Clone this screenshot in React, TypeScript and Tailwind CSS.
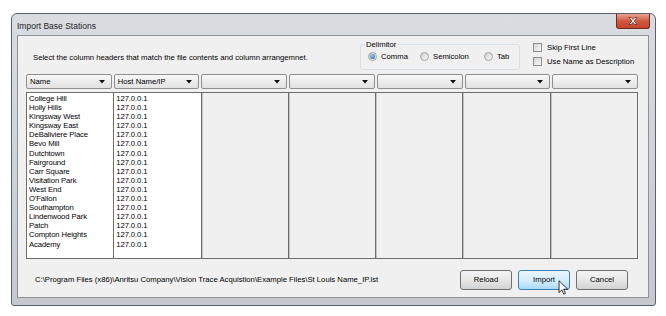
import React from 'react';

const stations = [
  'College Hill',
  'Holly Hills',
  'Kingsway West',
  'Kingsway East',
  'DeBaliviere Place',
  'Bevo Mill',
  'Dutchtown',
  'Fairground',
  'Carr Square',
  'Visitation Park',
  'West End',
  "O'Fallon",
  'Southampton',
  'Lindenwood Park',
  'Patch',
  'Compton Heights',
  'Academy',
];

const headers = ['Name', 'Host Name/IP', '', '', '', '', ''];

const Radio = ({ checked = false }: { checked?: boolean }) => (
  <span className="flex h-[9px] w-[9px] shrink-0 items-center justify-center rounded-full border border-[#a3a3a3] bg-linear-to-br from-[#cfcfcf] to-[#f9f9f9]">
    {checked && <span className="h-[5px] w-[5px] rounded-full bg-[radial-gradient(circle_at_40%_35%,#8fd0f5,#1d5e9e)]" />}
  </span>
);

const Check = () => (
  <span className="block h-[9px] w-[9px] border border-[#8f8f8f] bg-linear-to-br from-[#d6d6d6] to-[#f7f7f7]" />
);

const Button = ({ label, hot = false }: { label: string; hot?: boolean }) => (
  <div
    className={
      hot
        ? 'flex h-[20px] w-[52px] items-center justify-center rounded-[3px] border border-[#3c7fb1] bg-linear-to-b from-[#eaf6fd] via-[#d6eefb] to-[#a9daf6]'
        : 'flex h-[20px] w-[52px] items-center justify-center rounded-[3px] border border-[#707070] bg-linear-to-b from-[#f4f4f4] via-[#e8e8e8] to-[#d2d2d2]'
    }
  >
    {label}
  </div>
);

export default function App() {
  return (
    <div className="h-[316px] w-[666px] overflow-hidden bg-white pl-[11px] pt-[13px] font-['Liberation_Sans',Arial,sans-serif] text-[7.7px] leading-[9px] text-black">
      <div className="flex h-[293px] w-[645px] flex-col rounded-t-[6px] rounded-b-[3px] border border-[#5d6166] bg-linear-to-b from-[#d9dde2] to-[#c4c9cf]">
        {/* title bar */}
        <div className="flex h-[21px] items-start">
          <span className="ml-[5px] mt-[7px] text-[8.5px] leading-[10px] text-[#1e1e1e]">Import Base Stations</span>
          <div className="ml-auto mr-[5px] flex h-[15px] w-[34px] items-center justify-center rounded-b-[3px] border border-t-0 border-[#6b2b21] bg-linear-to-b from-[#e8a593] via-[#d0583f] to-[#c7442c]">
            <svg width="10" height="8" viewBox="0 0 10 8">
              <path
                d="M1 0.5h2.2L5 2.6 6.8 0.5H9L6.2 4 9 7.5H6.8L5 5.4 3.2 7.5H1L3.8 4z"
                fill="#fff"
                stroke="#5a1d14"
                strokeWidth="0.7"
              />
            </svg>
          </div>
        </div>

        {/* client area */}
        <div className="ml-[5px] flex h-[263px] w-[632px] flex-col border border-[#8d9298] bg-[#f0f0f0]">
          <div className="flex h-[38px]">
            <div className="w-[342px] pl-[15px] pt-[17px]">
              Select the column headers that match the file contents and column arrangemnet.
            </div>
            <div className="mt-[8px] h-[26px] w-[160px] rounded-[3px] border border-[#d5dfe5]">
              <span className="-mt-[5px] ml-[4px] block w-fit bg-[#f0f0f0] px-[1px] leading-[9px]">Delimitor</span>
              <div className="mt-[3px] flex items-center pl-[7px]">
                <div className="flex w-[52px] items-center gap-[4px]">
                  <Radio checked />
                  <span>Comma</span>
                </div>
                <div className="flex w-[64px] items-center gap-[4px]">
                  <Radio />
                  <span>Semicolon</span>
                </div>
                <div className="flex items-center gap-[4px]">
                  <Radio />
                  <span>Tab</span>
                </div>
              </div>
            </div>
            <div className="ml-[13px] flex flex-col gap-[5px] pt-[7px]">
              <div className="flex items-center gap-[5px]">
                <Check />
                <span>Skip First Line</span>
              </div>
              <div className="flex items-center gap-[5px]">
                <Check />
                <span>Use Name as Description</span>
              </div>
            </div>
          </div>

          {/* header dropdowns */}
          <div className="ml-[8px] grid w-[612px] grid-cols-7 gap-[2px]">
            {headers.map((h, i) => (
              <div
                key={i}
                className="flex h-[15px] items-center rounded-[2px] border border-[#8e8f8f] bg-linear-to-b from-[#f8f8f8] to-[#e2e2e2] pl-[3px] pr-[6px]"
              >
                <span className="flex-1">{h}</span>
                <svg width="6" height="4" viewBox="0 0 6 4">
                  <path d="M0 0h6L3 3.5z" fill="#111" />
                </svg>
              </div>
            ))}
          </div>

          {/* columns */}
          <div className="ml-[8px] mt-[3px] grid h-[167px] w-[612px] grid-cols-7 border-y border-r border-[#6d6d6d]">
            <div className="border-l border-[#6d6d6d] bg-white pl-[2px] pt-[1px] leading-[9.1px] tracking-[-0.1px]">
              {stations.map((s) => (
                <div key={s}>{s}</div>
              ))}
            </div>
            <div className="border-l border-[#6d6d6d] bg-white pl-[2px] pt-[1px] leading-[9.1px] tracking-[-0.1px]">
              {stations.map((s) => (
                <div key={s}>127.0.0.1</div>
              ))}
            </div>
            {[0, 1, 2, 3, 4].map((i) => (
              <div key={i} className="border-l border-[#6d6d6d] bg-[#f0f0f0] shadow-[inset_1px_0_0_#c4c4c4]" />
            ))}
          </div>

          {/* bottom */}
          <div className="flex flex-1 items-center pt-[3px]">
            <span className="pl-[17px]">
              C:\Program Files (x86)\Anritsu Company\Vision Trace Acquistion\Example Files\St Louis Name_IP.lst
            </span>
            <div className="ml-auto mr-[20px] flex gap-[6px]">
              <Button label="Reload" />
              <div className="relative">
                <Button label="Import" hot />
                <svg className="absolute left-[40px] top-[10px]" width="10" height="15" viewBox="0 0 12 19">
                  <path d="M1 1v15l3.5-3.5 2.5 5.5 2.2-1-2.4-5.3H12z" fill="#fff" stroke="#000" strokeWidth="1" strokeLinejoin="miter" />
                </svg>
              </div>
              <Button label="Cancel" />
            </div>
          </div>
        </div>
      </div>
    </div>
  );
}
